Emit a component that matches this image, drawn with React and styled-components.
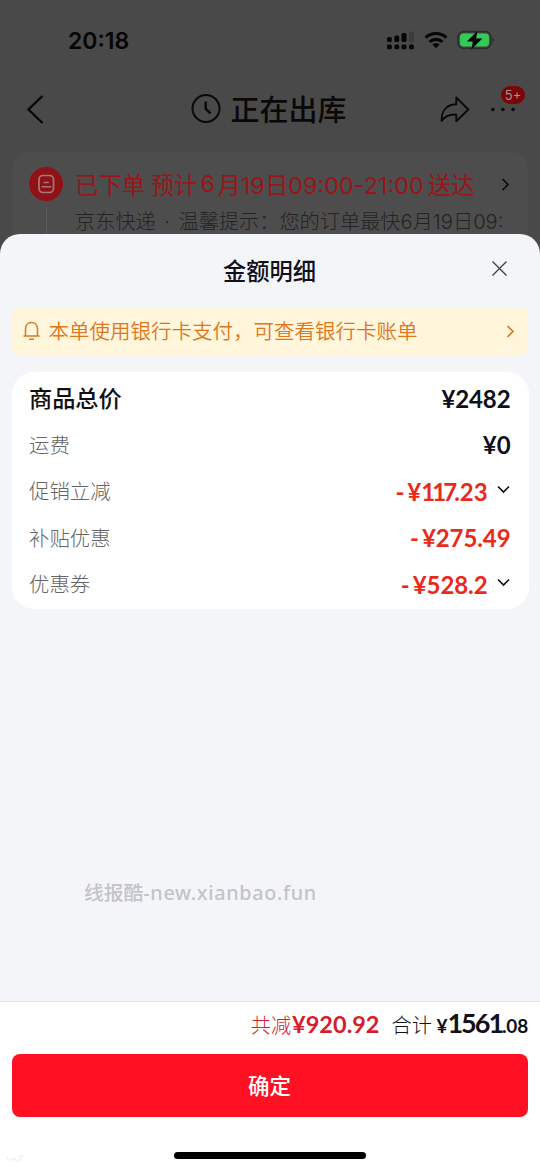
import styled, { createGlobalStyle } from "styled-components";

const cjk = `"Noto Sans CJK SC", sans-serif`;

const GlobalStyle = createGlobalStyle`
  * {
    box-sizing: border-box;
  }
  body {
    margin: 0;
    background: #494949;
    font-family: Inter, ${cjk};
  }
`;

const Phone = styled.div`
  display: flex;
  flex-direction: column;
  width: 540px;
  height: 1170px;
  background: #494949;
  position: relative;
  overflow: hidden;
`;
const StatusBar = styled.div`
  display: flex;
  align-items: center;
  justify-content: space-between;
  height: 80px;
  padding: 0 45px 0 68px;
`;
const Time = styled.span`
  padding-top: 2px;
  font-size: 23px;
  font-weight: 600;
  color: #060606;
`;
const StatusIcons = styled.div`
  display: flex;
  align-items: center;
  gap: 9px;
`;
const NavBar = styled.div`
  display: grid;
  grid-template-columns: 120px 1fr 120px;
  align-items: center;
  height: 58px;
`;
const BackButton = styled.div`
  display: flex;
  padding-left: 26px;
`;
const NavTitle = styled.div`
  display: flex;
  align-items: center;
  justify-content: center;
  gap: 9px;
  padding-right: 2px;
  font-family: ${cjk};
  font-size: 29px;
  font-weight: 500;
  color: #090909;

  span {
    line-height: 40px;
    margin-top: -3px;
  }
`;
const NavActions = styled.div`
  display: flex;
  align-items: center;
  gap: 21px;
  padding-left: 20px;
`;
const More = styled.div`
  position: relative;
  display: flex;
`;
const Badge = styled.span`
  position: absolute;
  left: 10px;
  top: -21px;
  width: 24px;
  height: 18px;
  border-radius: 9px;
  background: #7c0508;
  color: #999;
  font-size: 13px;
  line-height: 18px;
  text-align: center;
`;
const OrderCard = styled.div`
  display: flex;
  height: 100px;
  margin: 14px 12px 0;
  padding: 15px 17px 0;
  border-radius: 16px;
  background: #4d4d4d;
`;
const Track = styled.div`
  display: flex;
  flex-direction: column;
  align-items: center;
  gap: 7px;
  width: 34px;
  margin-right: 12px;
`;
const TrackLine = styled.div`
  width: 1px;
  flex: 1;
  background: #5b5b5b;
`;
const OrderInfo = styled.div`
  flex: 1;
  min-width: 0;
`;
const OrderHead = styled.div`
  display: flex;
  align-items: center;
  height: 35px;
  font-size: 23.4px;
  color: #991519;
  white-space: nowrap;

  svg {
    margin-left: auto;
    margin-right: 1px;
  }
`;
const HeadPart = styled.span`
  margin-right: ${(p) => p.$gap || 0}px;
  padding-bottom: 2px;
`;
const OrderTip = styled.div`
  display: flex;
  height: 36px;
  padding-top: 2px;
  line-height: 36px;
  font-size: 20.2px;
  font-weight: 300;
  color: #242424;
  white-space: nowrap;
`;
const Dot = styled.span`
  margin: 0 8.5px;
`;
const Sheet = styled.div`
  display: flex;
  flex-direction: column;
  height: 936px;
  margin-top: -18px;
  position: relative;
  border-radius: 20px 20px 0 0;
  background: #f4f5f9;
  overflow: hidden;
`;
const SheetHead = styled.div`
  display: grid;
  grid-template-columns: 60px 1fr 60px;
  align-items: center;
  height: 73px;
`;
const SheetTitle = styled.div`
  grid-column: 2;
  padding: 0 1px 2px 0;
  text-align: center;
  font-family: ${cjk};
  font-size: 23.3px;
  font-weight: 500;
  color: #111119;
`;
const CloseButton = styled.div`
  display: flex;
  padding: 0 0 4px 11px;
`;
const Notice = styled.div`
  display: flex;
  align-items: center;
  height: 48px;
  margin: 0 12px;
  padding: 0 13px 0 11px;
  border-radius: 8px;
  background: #fff6dc;
  color: #e0761c;
  font-family: ${cjk};
  font-size: 20.5px;
  font-weight: 350;
  white-space: nowrap;

  span {
    flex: 1;
    margin-left: 8.5px;
    padding-bottom: 2px;
  }
`;
const PriceCard = styled.div`
  height: 237px;
  margin: 17px 11.5px 0;
  padding: 2px 18px 0 17.5px;
  border-radius: 22px;
  background: #fff;
`;
const PriceRow = styled.div`
  display: flex;
  align-items: center;
  justify-content: space-between;
  height: 46.5px;
`;
const Label = styled.span`
  font-family: ${cjk};
  font-size: ${(p) => (p.$strong ? "23.2px" : "20.4px")};
  font-weight: ${(p) => (p.$strong ? 500 : 300)};
  color: ${(p) => (p.$strong ? "#111" : "#646464")};
`;
const Amount = styled.span`
  display: flex;
  align-items: center;
  padding-top: 2px;
  font-family: Lato, sans-serif;
  font-size: 24px;
  font-weight: 700;
  color: ${(p) => (p.$minus ? "#e92a1b" : "#0f0f1b")};

  i {
    font-style: normal;
    margin-right: 3px;
  }
  svg {
    margin: -3px 1px 0 9px;
  }
`;
const Digits = styled.span`
  letter-spacing: -0.1px;
`;
const Tight = styled.span`
  letter-spacing: -2.9px;
`;
const Watermark = styled.div`
  position: absolute;
  left: 84px;
  top: 645px;
  font-family: "Noto Sans", ${cjk};
  font-size: 19.8px;
  font-weight: 500;
  line-height: 28px;
  color: #c3c4c7;
  white-space: nowrap;

  span {
    letter-spacing: 0.65px;
  }
`;
const Footer = styled.div`
  display: flex;
  flex-direction: column;
  height: 169px;
  margin-top: auto;
  padding: 0 12px;
  border-top: 1px solid #e3e4e8;
  background: #fff;
  position: relative;
`;
const Totals = styled.div`
  display: flex;
  align-items: baseline;
  justify-content: flex-end;
  height: 52px;
  line-height: 45px;
  font-family: ${cjk};
  font-size: 20.2px;
  font-weight: 300;
  color: #111119;
`;
const Saved = styled.span`
  color: #d81c2b;
  margin-right: 12px;
`;
const Figure = styled.b`
  font-family: Lato, sans-serif;
  font-size: ${(p) => p.$size}px;
  font-weight: 700;
  line-height: 1;
  letter-spacing: ${(p) => p.$track || 0}px;
  margin-left: ${(p) => p.$gap || 0}px;
`;
const Confirm = styled.button`
  height: 63px;
  padding: 0 1px 2px 0;
  border: none;
  border-radius: 8px;
  background: #ff1022;
  color: #fff;
  font-family: ${cjk};
  font-size: 21.5px;
  font-weight: 500;
`;
const HomeBar = styled.div`
  width: 192px;
  height: 7px;
  margin: 35px auto 0;
  border-radius: 4px;
  background: #000;
`;
const CornerMark = styled.svg`
  position: absolute;
  left: 6px;
  bottom: 7px;
`;

const Signal = () => (
  <svg width="28" height="20" viewBox="0 0 28 20" fill="#060606">
    <rect x="0" y="7" width="4.8" height="5" rx="1.5" />
    <rect x="7.4" y="5.5" width="4.8" height="6.5" rx="1.5" />
    <rect x="14.5" y="3" width="5" height="9" rx="1.5" />
    <rect x="22" y="1.5" width="5" height="10.5" rx="1.5" fill="#3c3c3c" />
    <rect x="0" y="14.5" width="4.8" height="4.7" rx="1.5" />
    <rect x="7.4" y="14.5" width="4.8" height="4.7" rx="1.5" />
    <rect x="14.5" y="14.5" width="5" height="4.7" rx="1.5" />
    <rect x="22" y="14.5" width="5" height="4.7" rx="1.5" />
  </svg>
);

const Wifi = () => (
  <svg width="24" height="18" viewBox="0 0 24 18">
    <g fill="none" stroke="#060606" strokeWidth="3.2">
      <path d="M1.6 6.7C7.4 1.1 16.6 1.1 22.4 6.7" />
      <path d="M5.6 10.9C9.2 7.5 14.8 7.5 18.4 10.9" />
    </g>
    <path d="M12 17.2L8.3 13.6C10.3 11.7 13.7 11.7 15.7 13.6Z" fill="#060606" />
  </svg>
);

const Battery = () => (
  <svg width="38" height="20" viewBox="0 0 38 20">
    <rect x="1" y="1.6" width="33" height="16.8" rx="5.5" fill="none" stroke="#2d302e" strokeWidth="1.6" />
    <rect x="3" y="3.4" width="29" height="13.2" rx="3.8" fill="#35c958" />
    <path d="M35.5 7.3C37.5 8 37.5 12 35.5 12.7Z" fill="#2d302e" />
    <path d="M20.5 0.8L9.8 11.4H15.8L14.4 19.4L25.4 8.6H19.2Z" fill="#060606" />
  </svg>
);

const Chevron = ({ down, color = "#111", width = 9, height = 13 }) => (
  <svg width={width} height={height} viewBox={down ? "0 0 13 9" : "0 0 9 13"} fill="none" stroke={color} strokeWidth="1.7">
    <path d={down ? "M1 1.5L6.5 7L12 1.5" : "M1.5 1L7 6.5L1.5 12"} />
  </svg>
);

const rows = [
  { label: "商品总价", value: "¥2482", strong: true },
  { label: "运费", value: "¥0" },
  { label: "促销立减", value: <>¥<Tight>117</Tight>.23</>, minus: true, open: true },
  { label: "补贴优惠", value: "¥275.49", minus: true },
  { label: "优惠券", value: "¥528.2", minus: true, open: true },
];

const App = () => {
  return (
    <Phone>
      <GlobalStyle />
      <StatusBar>
        <Time>20:18</Time>
        <StatusIcons>
          <Signal />
          <Wifi />
          <Battery />
        </StatusIcons>
      </StatusBar>
      <NavBar>
        <BackButton>
          <svg width="18" height="30" viewBox="0 0 18 30" fill="none" stroke="#080808" strokeWidth="2.4">
            <path d="M16.5 2L2.5 15.5L16.5 29" />
          </svg>
        </BackButton>
        <NavTitle>
          <svg width="30" height="30" viewBox="0 0 30 30" fill="none" stroke="#090909" strokeWidth="2">
            <circle cx="15" cy="14.5" r="13.5" />
            <path d="M14.7 7.5V14.7L19.5 19.5" strokeWidth="2.4" />
          </svg>
          <span>正在出库</span>
        </NavTitle>
        <NavActions>
          <svg width="30" height="27" viewBox="0 0 30 27" fill="none" stroke="#090909" strokeWidth="1.9" strokeLinejoin="round">
            <path d="M16.3 1.5L28.3 13.5L16.3 25.2V18.6C10.5 18.2 5 20 1.6 25C1.3 14.5 7 8.6 16.3 8.3Z" />
          </svg>
          <More>
            <svg width="26" height="5" viewBox="0 0 26 5" fill="#090909">
              <circle cx="1.9" cy="2.5" r="1.8" />
              <circle cx="11.9" cy="2.5" r="1.8" />
              <circle cx="22" cy="2.5" r="1.8" />
            </svg>
            <Badge>5+</Badge>
          </More>
        </NavActions>
      </NavBar>
      <OrderCard>
        <Track>
          <svg width="34" height="34" viewBox="0 0 34 34" fill="none" stroke="#a3797a" strokeWidth="1.7">
            <circle cx="17" cy="17" r="17" fill="#911216" stroke="none" />
            <rect x="10" y="8.5" width="14.5" height="17" rx="4" />
            <path d="M12.5 19.8H22.2M14.5 15.6H19.8" strokeWidth="1.5" />
          </svg>
          <TrackLine />
        </Track>
        <OrderInfo>
          <OrderHead>
            <HeadPart $gap={5.5}>已下单</HeadPart>
            <HeadPart $gap={3}>预计</HeadPart>
            <HeadPart $gap={2.5}>6</HeadPart>
            <HeadPart $gap={4}>月19日09:00-21:00</HeadPart>
            <HeadPart>送达</HeadPart>
            <Chevron color="#0b0b0b" />
          </OrderHead>
          <OrderTip>
            京东快递<Dot>·</Dot>温馨提示：您的订单最快6月19日09:
          </OrderTip>
        </OrderInfo>
      </OrderCard>
      <Sheet>
        <SheetHead>
          <SheetTitle>金额明细</SheetTitle>
          <CloseButton>
            <svg width="17" height="17" viewBox="0 0 17 17" stroke="#414149" strokeWidth="1.4">
              <path d="M1.5 1.5L15.5 15.5M15.5 1.5L1.5 15.5" />
            </svg>
          </CloseButton>
        </SheetHead>
        <Notice>
          <svg width="17" height="20" viewBox="0 0 17 20" fill="none" stroke="#dc7824" strokeWidth="1.5">
            <path d="M0.5 15H16.5M2.5 15V8C2.5 4 5 1.5 8.5 1.5S14.5 4 14.5 8V15M6 18.3H11" />
          </svg>
          <span>本单使用银行卡支付，可查看银行卡账单</span>
          <Chevron color="#dc7824" />
        </Notice>
        <PriceCard>
          {rows.map((r) => (
            <PriceRow key={r.label}>
              <Label $strong={r.strong}>{r.label}</Label>
              <Amount $minus={r.minus}>
                {r.minus && <i>-</i>}
                <Digits>{r.value}</Digits>
                {r.open && <Chevron down width={13} height={9} />}
              </Amount>
            </PriceRow>
          ))}
        </PriceCard>
        <Watermark>
          线报酷<span>-new.xianbao.fun</span>
        </Watermark>
        <Footer>
          <Totals>
            <Saved>
              共减<Figure $size={23.5} $gap={1}>¥920.92</Figure>
            </Saved>
            合计
            <Figure $size={19} $gap={4.5}>¥</Figure>
            <Figure $size={27} $track={-2}>1561</Figure>
            <Figure $size={19} $track={-0.2}>.08</Figure>
          </Totals>
          <Confirm>确定</Confirm>
          <HomeBar />
          <CornerMark width="18" height="10" viewBox="0 0 18 10" fill="none" stroke="#f3f3f3" strokeWidth="1.6">
            <path d="M1 3C1 7 5 9 8 5C11 9 17 7 16 2L13 4" />
          </CornerMark>
        </Footer>
      </Sheet>
    </Phone>
  );
};
export default App;
